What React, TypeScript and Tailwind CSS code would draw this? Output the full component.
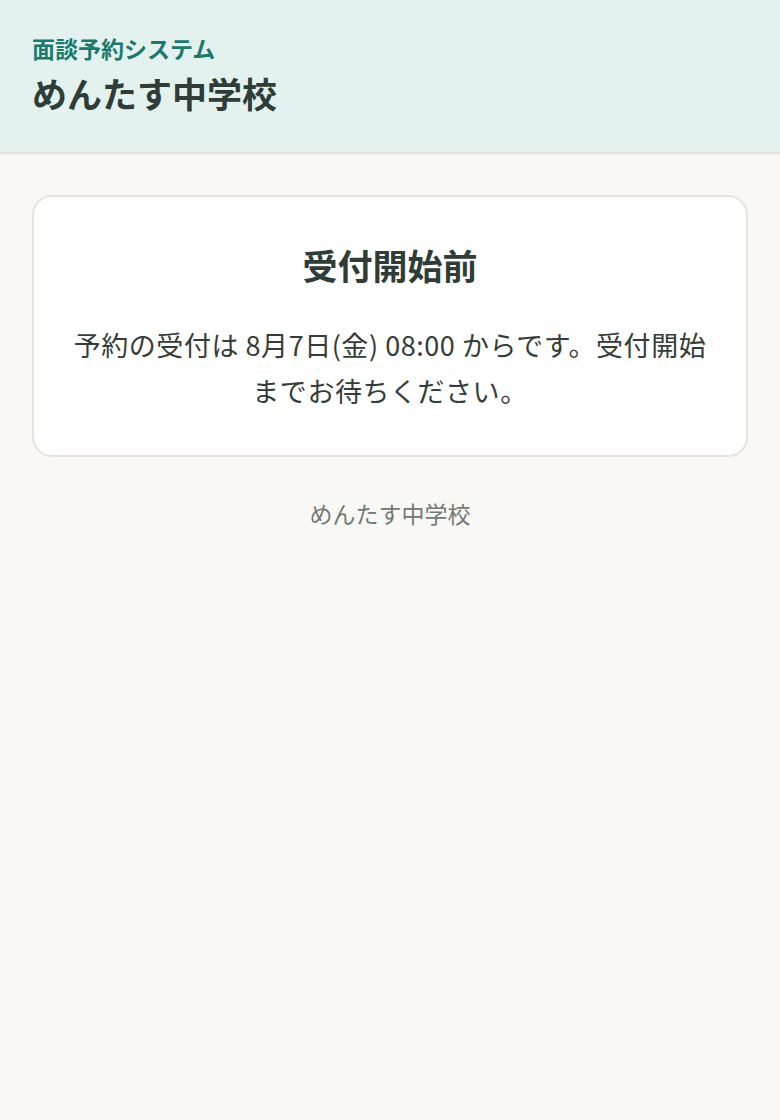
import React from "react";

const App = () => {
  return (
    <div
      className="min-h-[1120px] bg-[#f9f8f5] text-[#2f3b37]"
      style={{ fontFamily: '"Noto Sans CJK JP", "Noto Sans", sans-serif' }}
    >
      <header className="h-[154px] bg-[#e4f2ef] border-b-2 border-[#e4e2dc] px-8 pt-[32px]">
        <div className="text-[23px] leading-[32px] font-bold text-[#1c7a6c]">面談予約システム</div>
        <h1 className="mt-[5px] text-[35px] leading-[48px] font-bold text-[#2f3d38]">めんたす中学校</h1>
      </header>

      <main className="px-8 pt-[41px]">
        <div className="bg-white border-2 border-[#e6e4dd] rounded-[20px] px-6 pt-[44px] pb-[41px] text-center">
          <h2 className="text-[35px] leading-[48px] font-bold text-[#2f3d38]">受付開始前</h2>
          <p className="mt-[33px] text-[27px] leading-[46px] tracking-[0.02em] text-[#333d39]">
            予約の受付は 8月7日(金) 08:00 からです。受付開始
            <br />
            までお待ちください。
          </p>
        </div>
        <p className="mt-[40px] text-center text-[23px] leading-[32px] text-[#727a76]">めんたす中学校</p>
      </main>
    </div>
  );
};

export default App;
